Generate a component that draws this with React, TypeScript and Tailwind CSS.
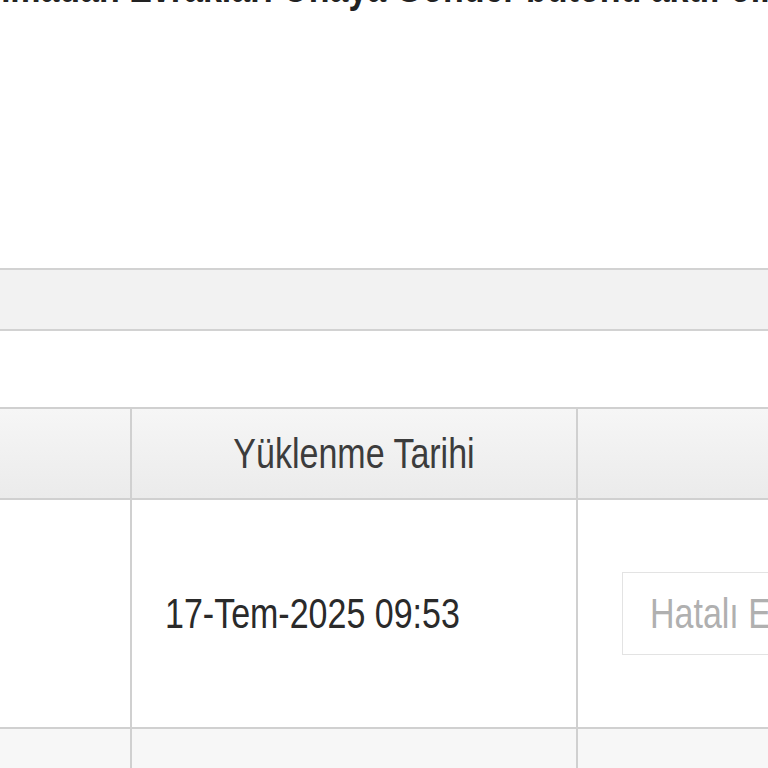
export default function App() {
  return (
    <div className="h-[768px] w-[768px] overflow-hidden bg-white font-['Liberation_Sans',Arial,sans-serif] text-[#333]">
      {/* notice text, cut at the top */}
      <div className="h-[268px] overflow-hidden">
        <p className="-ml-[347px] -mt-[33px] whitespace-nowrap text-[34px] leading-[40px] font-bold text-[#222]">
          <span className="inline-block scale-y-125">
            Yüklenmesi tamamlanmadan Evrakları Onaya Gönder butonu aktif olmayacaktır.
          </span>
        </p>
      </div>

      <div className="h-[63px] border-y-2 border-[#d2d2d2] bg-[#f2f2f2]" />
      <div className="h-[76px]" />

      {/* table */}
      <div className="flex h-[93px] border-y-2 border-[#d0d0d0] bg-linear-to-b from-[#f6f6f6] to-[#ebebeb]">
        <div className="w-[132px] shrink-0 border-r-2 border-[#d0d0d0]" />
        <div className="flex w-[446px] shrink-0 items-center justify-center border-r-2 border-[#d0d0d0] text-[34px] text-[#3c3c3c]">
          <span className="inline-block scale-y-125">Yüklenme Tarihi</span>
        </div>
        <div className="min-w-0 flex-1" />
      </div>

      <div className="flex h-[229px] border-b-2 border-[#d0d0d0]">
        <div className="w-[132px] shrink-0 border-r-2 border-[#d0d0d0]" />
        <div className="flex w-[446px] shrink-0 items-center whitespace-nowrap border-r-2 border-[#d0d0d0] pl-[33px] text-[34px] text-[#2a2a2a]">
          <span className="inline-block scale-y-125">17-Tem-2025 09:53</span>
        </div>
        <div className="flex min-w-0 flex-1 items-center overflow-hidden pl-[44px]">
          <div className="flex h-[83px] w-[300px] shrink-0 items-center border border-[#e3e3e3] pl-[27px]">
            <span className="inline-block whitespace-nowrap text-[34px] text-[#b0b0b0] scale-y-125">
              Hatalı Evrak Açıklaması
            </span>
          </div>
        </div>
      </div>

      <div className="flex h-[60px] bg-[#f7f7f7]">
        <div className="w-[132px] shrink-0 border-r-2 border-[#d0d0d0]" />
        <div className="w-[446px] shrink-0 border-r-2 border-[#d0d0d0]" />
        <div className="min-w-0 flex-1" />
      </div>
    </div>
  );
}
